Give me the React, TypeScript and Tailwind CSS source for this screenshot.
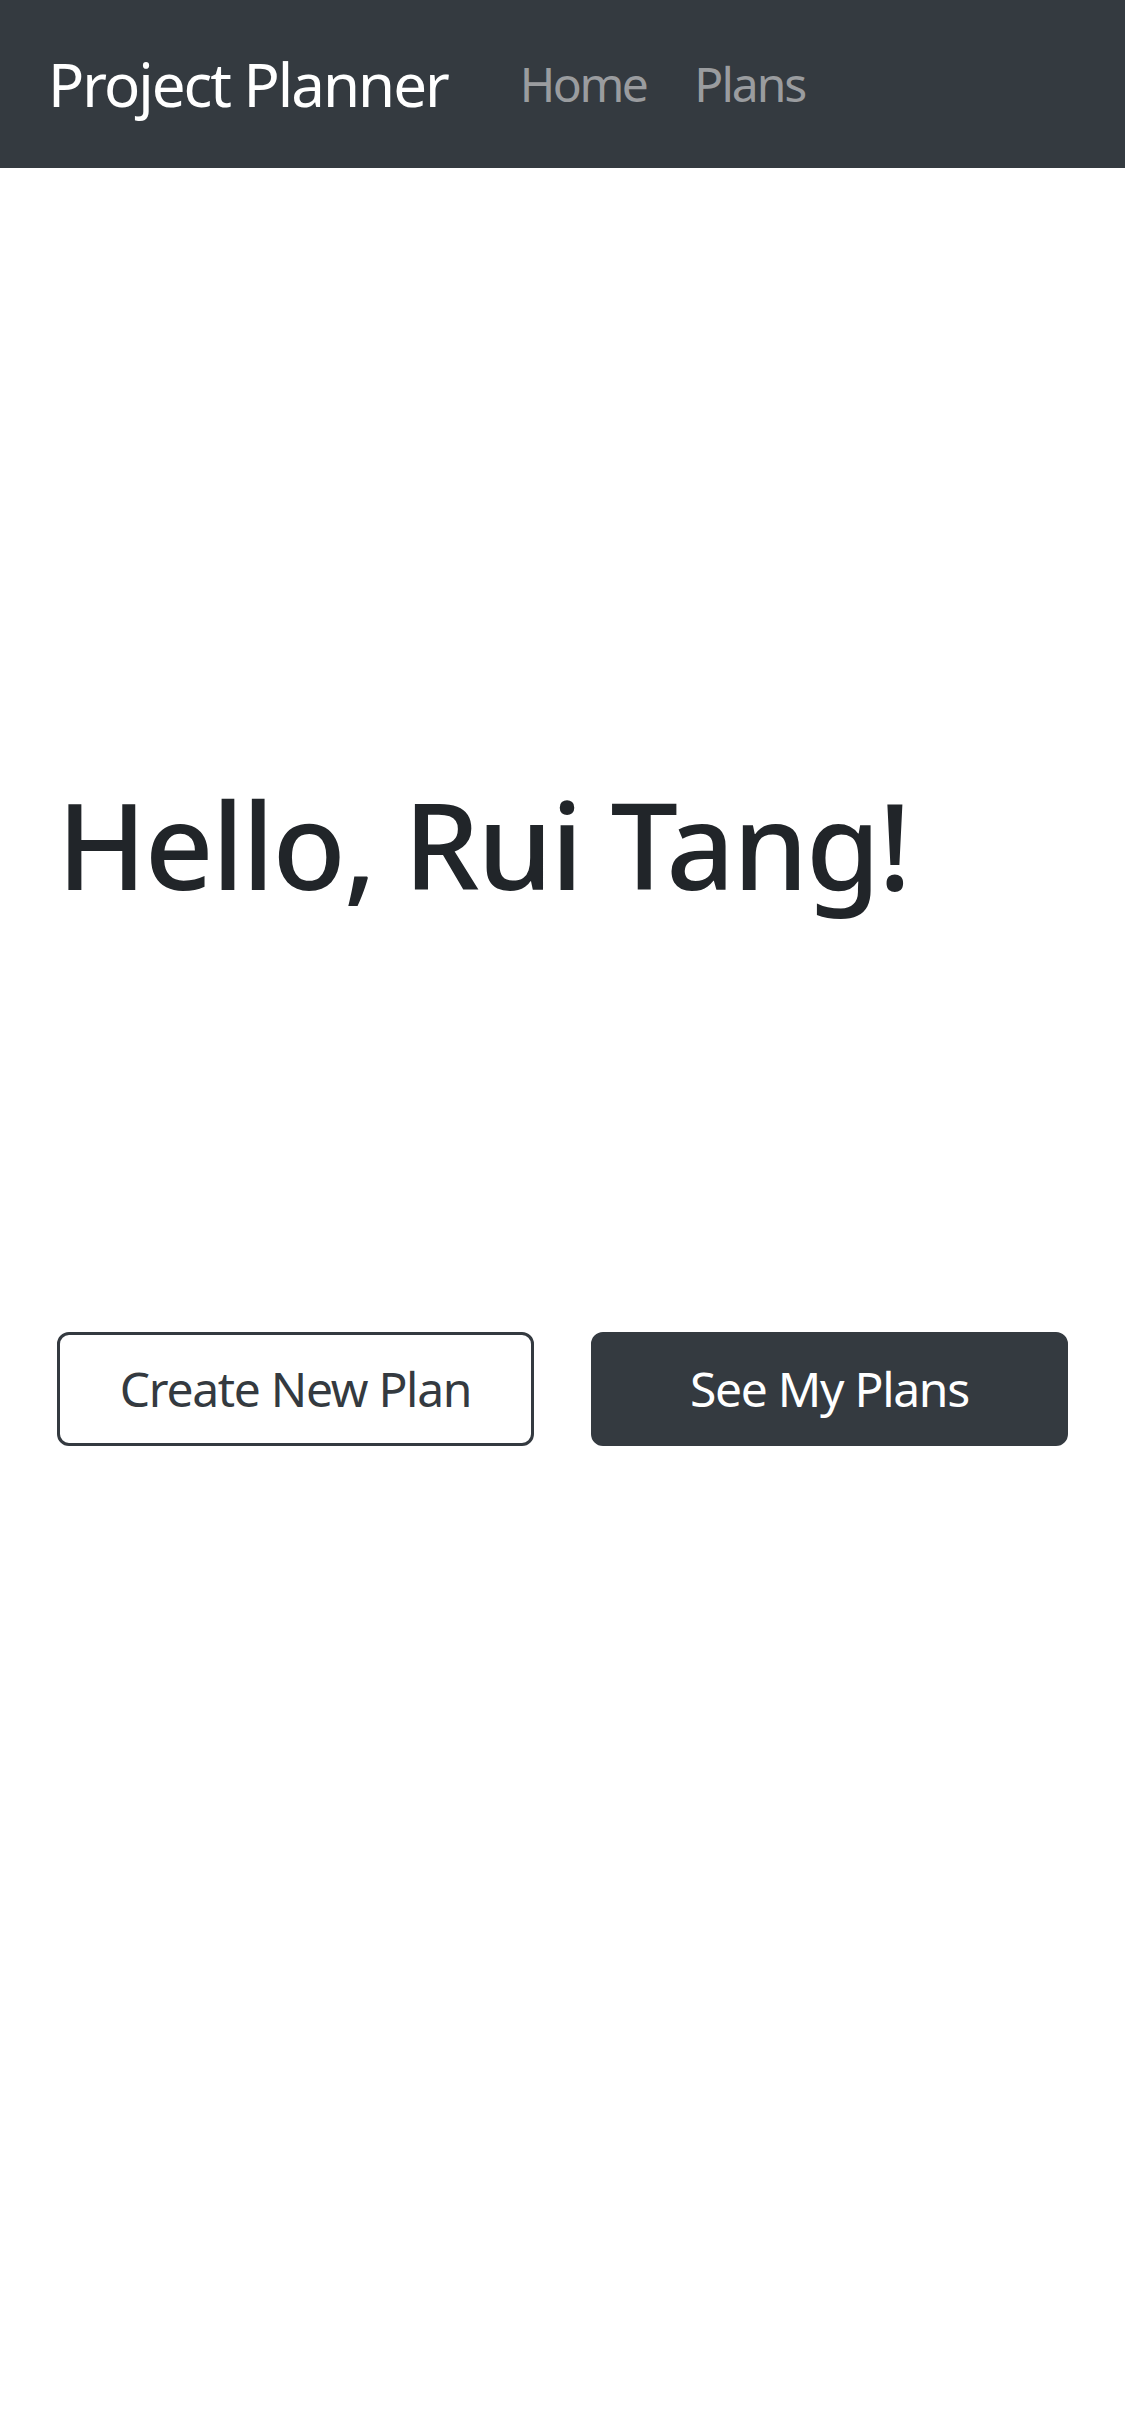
export default function App() {
  return (
    <div className="min-h-[2436px] bg-white font-['Noto_Sans',sans-serif]">
      {/* Navbar */}
      <nav className="flex h-[168px] items-center bg-[#343a40] px-[48px]">
        <a className="mr-[48px] text-[60px] leading-[1.5] tracking-[-2px] text-white">Project Planner</a>
        <div className="flex">
          <a className="px-[24px] text-[48px] leading-[1.5] tracking-[-2.5px] text-[#9a9c9f]">Home</a>
          <a className="px-[24px] text-[48px] leading-[1.5] tracking-[-2px] text-[#9a9c9f]">Plans</a>
        </div>
      </nav>

      {/* Greeting */}
      <div className="px-[57px]">
        <h1 className="mt-[604px] text-[120px] font-medium leading-[1.2] tracking-[-2px] text-[#212529]">
          Hello, Rui Tang!
        </h1>
        <div className="mt-[416px] flex gap-[57px]">
          <button className="h-[114px] flex-1 rounded-[12px] border-[3px] border-[#343a40] bg-white text-[48px] tracking-[-1.3px] text-[#343a40]">
            Create New Plan
          </button>
          <button className="h-[114px] flex-1 rounded-[12px] border-[3px] border-[#343a40] bg-[#343a40] text-[48px] tracking-[-1.3px] text-white">
            See My Plans
          </button>
        </div>
      </div>
    </div>
  );
}
